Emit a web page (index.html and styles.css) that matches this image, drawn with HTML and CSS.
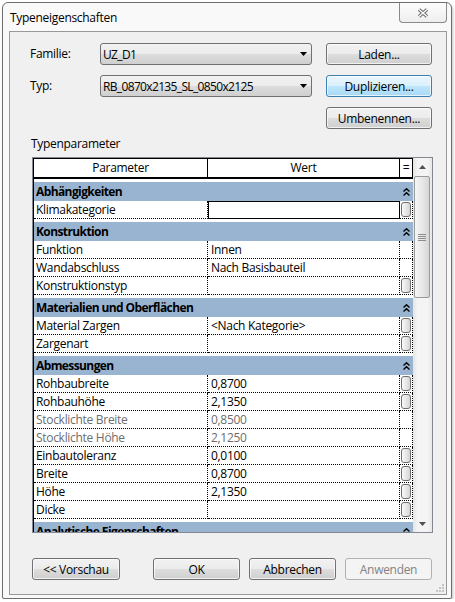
FILE: index.html
```html
<!DOCTYPE html>
<html lang="de">
<head>
    <meta charset="UTF-8">
    <title>Typeneigenschaften</title>
    <link rel="stylesheet" href="styles.css">
</head>
<body>
    <div class="window">
        <!-- Titelleiste -->
        <div class="titlebar">
            <span class="title">Typeneigenschaften</span>
            <div class="close-btn">
                <svg width="12" height="10" viewBox="0 0 12 10">
                    <path d="M2 1.5 L10 8.5 M10 1.5 L2 8.5" stroke="#6a6a6a" stroke-width="3.4" fill="none"/>
                    <path d="M2 1.5 L10 8.5 M10 1.5 L2 8.5" stroke="#fff" stroke-width="1.3" fill="none"/>
                </svg>
            </div>
        </div>

        <div class="client">
            <!-- Familie / Typ -->
            <div class="type-grid">
                <span class="label">Familie:</span>
                <div class="combo"><span class="combo-text">UZ_D1</span><svg class="drop" width="7" height="4" viewBox="0 0 7 4"><polygon points="0,0 7,0 3.5,4" fill="#000"/></svg></div>
                <button class="btn">Laden...</button>

                <span class="label">Typ:</span>
                <div class="combo"><span class="combo-text">RB_0870x2135_SL_0850x2125</span><svg class="drop" width="7" height="4" viewBox="0 0 7 4"><polygon points="0,0 7,0 3.5,4" fill="#000"/></svg></div>
                <button class="btn btn-default">Duplizieren...</button>

                <button class="btn btn-rename">Umbenennen...</button>
            </div>

            <div class="section-label">Typenparameter</div>

            <!-- Eigenschaftentabelle -->
            <div class="props">
                <div class="props-grid">
                    <div class="head">
                        <div>Parameter</div>
                        <div>Wert</div>
                        <div>=</div>
                    </div>

                    <div class="group"><span>Abhängigkeiten</span><svg class="chev" width="7" height="8" viewBox="0 0 7 8"><path d="M0.5 3.5 L3.5 0.8 L6.5 3.5 M0.5 7.5 L3.5 4.8 L6.5 7.5" stroke="#000" stroke-width="1.4" fill="none"/></svg></div>
                    <div class="row"><div class="cell">Klimakategorie</div><div class="cell val edit"></div><div class="cell eq"><span class="mini"></span></div></div>

                    <div class="group"><span>Konstruktion</span><svg class="chev" width="7" height="8" viewBox="0 0 7 8"><path d="M0.5 3.5 L3.5 0.8 L6.5 3.5 M0.5 7.5 L3.5 4.8 L6.5 7.5" stroke="#000" stroke-width="1.4" fill="none"/></svg></div>
                    <div class="row"><div class="cell">Funktion</div><div class="cell val">Innen</div><div class="cell eq"></div></div>
                    <div class="row"><div class="cell">Wandabschluss</div><div class="cell val">Nach Basisbauteil</div><div class="cell eq"></div></div>
                    <div class="row"><div class="cell">Konstruktionstyp</div><div class="cell val"></div><div class="cell eq"><span class="mini"></span></div></div>

                    <div class="group"><span>Materialien und Oberflächen</span><svg class="chev" width="7" height="8" viewBox="0 0 7 8"><path d="M0.5 3.5 L3.5 0.8 L6.5 3.5 M0.5 7.5 L3.5 4.8 L6.5 7.5" stroke="#000" stroke-width="1.4" fill="none"/></svg></div>
                    <div class="row"><div class="cell">Material Zargen</div><div class="cell val">&lt;Nach Kategorie&gt;</div><div class="cell eq"><span class="mini"></span></div></div>
                    <div class="row"><div class="cell">Zargenart</div><div class="cell val"></div><div class="cell eq"><span class="mini"></span></div></div>

                    <div class="group"><span>Abmessungen</span><svg class="chev" width="7" height="8" viewBox="0 0 7 8"><path d="M0.5 3.5 L3.5 0.8 L6.5 3.5 M0.5 7.5 L3.5 4.8 L6.5 7.5" stroke="#000" stroke-width="1.4" fill="none"/></svg></div>
                    <div class="row"><div class="cell">Rohbaubreite</div><div class="cell val">0,8700</div><div class="cell eq"><span class="mini"></span></div></div>
                    <div class="row"><div class="cell">Rohbauhöhe</div><div class="cell val">2,1350</div><div class="cell eq"><span class="mini"></span></div></div>
                    <div class="row disabled"><div class="cell">Stocklichte Breite</div><div class="cell val">0,8500</div><div class="cell eq"></div></div>
                    <div class="row disabled"><div class="cell">Stocklichte Höhe</div><div class="cell val">2,1250</div><div class="cell eq"></div></div>
                    <div class="row"><div class="cell">Einbautoleranz</div><div class="cell val">0,0100</div><div class="cell eq"><span class="mini"></span></div></div>
                    <div class="row"><div class="cell">Breite</div><div class="cell val">0,8700</div><div class="cell eq"><span class="mini"></span></div></div>
                    <div class="row"><div class="cell">Höhe</div><div class="cell val">2,1350</div><div class="cell eq"><span class="mini"></span></div></div>
                    <div class="row"><div class="cell">Dicke</div><div class="cell val"></div><div class="cell eq"><span class="mini"></span></div></div>

                    <div class="group"><span>Analytische Eigenschaften</span><svg class="chev" width="7" height="8" viewBox="0 0 7 8"><path d="M0.5 3.5 L3.5 0.8 L6.5 3.5 M0.5 7.5 L3.5 4.8 L6.5 7.5" stroke="#000" stroke-width="1.4" fill="none"/></svg></div>
                </div>

                <!-- Bildlaufleiste -->
                <div class="scrollbar">
                    <div class="sb-arrow"><svg width="7" height="4" viewBox="0 0 7 4"><polygon points="0,4 7,4 3.5,0" fill="#505050"/></svg></div>
                    <div class="sb-thumb">
                        <svg width="8" height="7" viewBox="0 0 8 7">
                            <path d="M0 0.5 H8 M0 2.5 H8 M0 4.5 H8 M0 6.5 H8" stroke="#8e8e8e" stroke-width="1"/>
                        </svg>
                    </div>
                    <div class="sb-arrow sb-down"><svg width="7" height="4" viewBox="0 0 7 4"><polygon points="0,0 7,0 3.5,4" fill="#505050"/></svg></div>
                </div>
            </div>

            <!-- Schaltflächen unten -->
            <div class="footer">
                <button class="btn btn-preview">&lt;&lt; Vorschau</button>
                <button class="btn">OK</button>
                <button class="btn">Abbrechen</button>
                <button class="btn" disabled>Anwenden</button>
            </div>

            <svg class="grip" width="9" height="9" viewBox="0 0 9 9">
                <rect x="7" y="1" width="2" height="2" fill="#c4c4c4"/>
                <rect x="7" y="4" width="2" height="2" fill="#c4c4c4"/>
                <rect x="4" y="4" width="2" height="2" fill="#c4c4c4"/>
                <rect x="7" y="7" width="2" height="2" fill="#c4c4c4"/>
                <rect x="4" y="7" width="2" height="2" fill="#c4c4c4"/>
                <rect x="1" y="7" width="2" height="2" fill="#c4c4c4"/>
            </svg>
        </div>
    </div>
</body>
</html>
```

FILE: styles.css
```css
body {
    margin: 0;
    background: #fff;
    font-family: 'Open Sans', 'Noto Sans', sans-serif;
    font-size: 12px;
    letter-spacing: -0.3px;
    color: #000;
}
.window {
    box-sizing: border-box;
    width: 450px;
    height: 597px;
    margin: 2px 0 0 2px;
    padding: 0 4px 0 6px;
    border: 1px solid #6f6f6f;
    border-radius: 6px 6px 2px 2px;
    background: #f9f9f9;
    box-shadow: 1px 2px 3px rgba(0, 0, 0, 0.25);
}
.titlebar {
    display: flex;
    align-items: center;
    height: 28px;
    padding-left: 1px;
}
.close-btn {
    align-self: flex-start;
    margin-left: auto;
    box-sizing: border-box;
    width: 48px;
    height: 20px;
    border: 1px solid #8a8a8a;
    border-top: none;
    border-radius: 0 0 4px 4px;
    background: linear-gradient(#fdfdfd, #eeeeee);
    display: flex;
    align-items: center;
    justify-content: center;
}
.client {
    position: relative;
    box-sizing: border-box;
    width: 438px;
    height: 564px;
    padding: 11px 0 0 20px;
    border: 1px solid #999;
    background: #f0f0f0;
}
.type-grid {
    display: grid;
    grid-template-columns: 56px 212px 106px;
    grid-template-rows: repeat(3, 22px);
    column-gap: 14px;
    row-gap: 10px;
}
.label {
    line-height: 22px;
}
.combo {
    box-sizing: border-box;
    display: flex;
    align-items: center;
    height: 22px;
    padding: 0 4px 0 2px;
    border: 1px solid #707070;
    border-radius: 3px;
    background: linear-gradient(#f2f2f2 0%, #ebebeb 50%, #dddddd 51%, #cfcfcf 100%);
}
.combo-text {
    letter-spacing: -0.65px;
}
.combo .drop {
    margin-left: auto;
}
.btn {
    box-sizing: border-box;
    height: 22px;
    padding: 0;
    border: 1px solid #707070;
    border-radius: 3px;
    background: linear-gradient(#f2f2f2 0%, #ebebeb 50%, #dddddd 51%, #cfcfcf 100%);
    box-shadow: inset 0 0 0 1px rgba(255, 255, 255, 0.7);
    font: inherit;
    letter-spacing: inherit;
    color: #000;
}
.btn-default {
    border-color: #3c7fb1;
    background: linear-gradient(#eaf6fd 0%, #d9f0fc 50%, #bee6fd 51%, #a7d9f5 100%);
}
.btn-rename {
    grid-column: 3;
}
.btn:disabled {
    border-color: #adb2b5;
    background: #f4f4f4;
    box-shadow: none;
    color: #838383;
}
.section-label {
    margin: 7px 0 6px 1px;
    line-height: 15px;
}
.props {
    display: flex;
    box-sizing: border-box;
    width: 401px;
    height: 376px;
    margin-left: 2px;
    border: 1px solid #828790;
    background: #fff;
}
.props-grid {
    box-sizing: border-box;
    width: 380px;
    border-left: 1px solid #000;
    overflow: hidden;
}
.head {
    display: grid;
    grid-template-columns: 174px 192px 13px;
    box-sizing: border-box;
    height: 21px;
    border-top: 1px solid #000;
    border-bottom: 2px solid #000;
}
.head div {
    border-right: 1px solid #000;
    text-align: center;
    line-height: 18px;
}
.group {
    display: flex;
    align-items: center;
    box-sizing: border-box;
    height: 19px;
    margin-top: 3px;
    padding: 0 3px 0 2px;
    background: #99b4d1;
    font-weight: bold;
    letter-spacing: -0.6px;
}
.group .chev {
    margin-left: auto;
}
.row {
    display: grid;
    grid-template-columns: 174px 192px 13px;
    height: 18px;
}
.cell {
    box-sizing: border-box;
    padding-left: 2px;
    border-right: 1px dotted #000;
    border-bottom: 1px dotted #000;
    line-height: 17px;
    white-space: nowrap;
    overflow: hidden;
}
.cell.val {
    padding-left: 3px;
}
.cell.edit {
    border: 1px solid #000;
}
.cell.eq {
    padding-left: 1px;
}
.disabled .cell {
    color: #6d6d6d;
}
.mini {
    display: block;
    box-sizing: border-box;
    width: 10px;
    height: 15px;
    margin-top: 1px;
    border: 1px solid #6d6d6d;
    border-radius: 3px;
    background: linear-gradient(to right, #fafafa, #d4d4d4);
}
.scrollbar {
    display: flex;
    flex-direction: column;
    width: 19px;
    background: linear-gradient(to right, #e4e4e4, #f4f4f4 25%, #f4f4f4 75%, #e8e8e8);
}
.sb-arrow {
    display: flex;
    align-items: center;
    justify-content: center;
    height: 17px;
}
.sb-down {
    margin-top: auto;
}
.sb-thumb {
    display: flex;
    align-items: center;
    justify-content: center;
    box-sizing: border-box;
    width: 16px;
    height: 122px;
    margin: 1px 0 0 1px;
    border: 1px solid #9a9a9a;
    border-radius: 2px;
    background: linear-gradient(to right, #f5f5f5, #e8e8e8 50%, #d6d6d6);
}
.footer {
    display: flex;
    gap: 9px;
    width: 400px;
    margin: 25px 0 0 2px;
}
.footer .btn {
    width: 87px;
}
.footer .btn-preview {
    width: 88px;
    margin-right: auto;
}
.grip {
    position: absolute;
    right: 2px;
    bottom: 2px;
}
```
